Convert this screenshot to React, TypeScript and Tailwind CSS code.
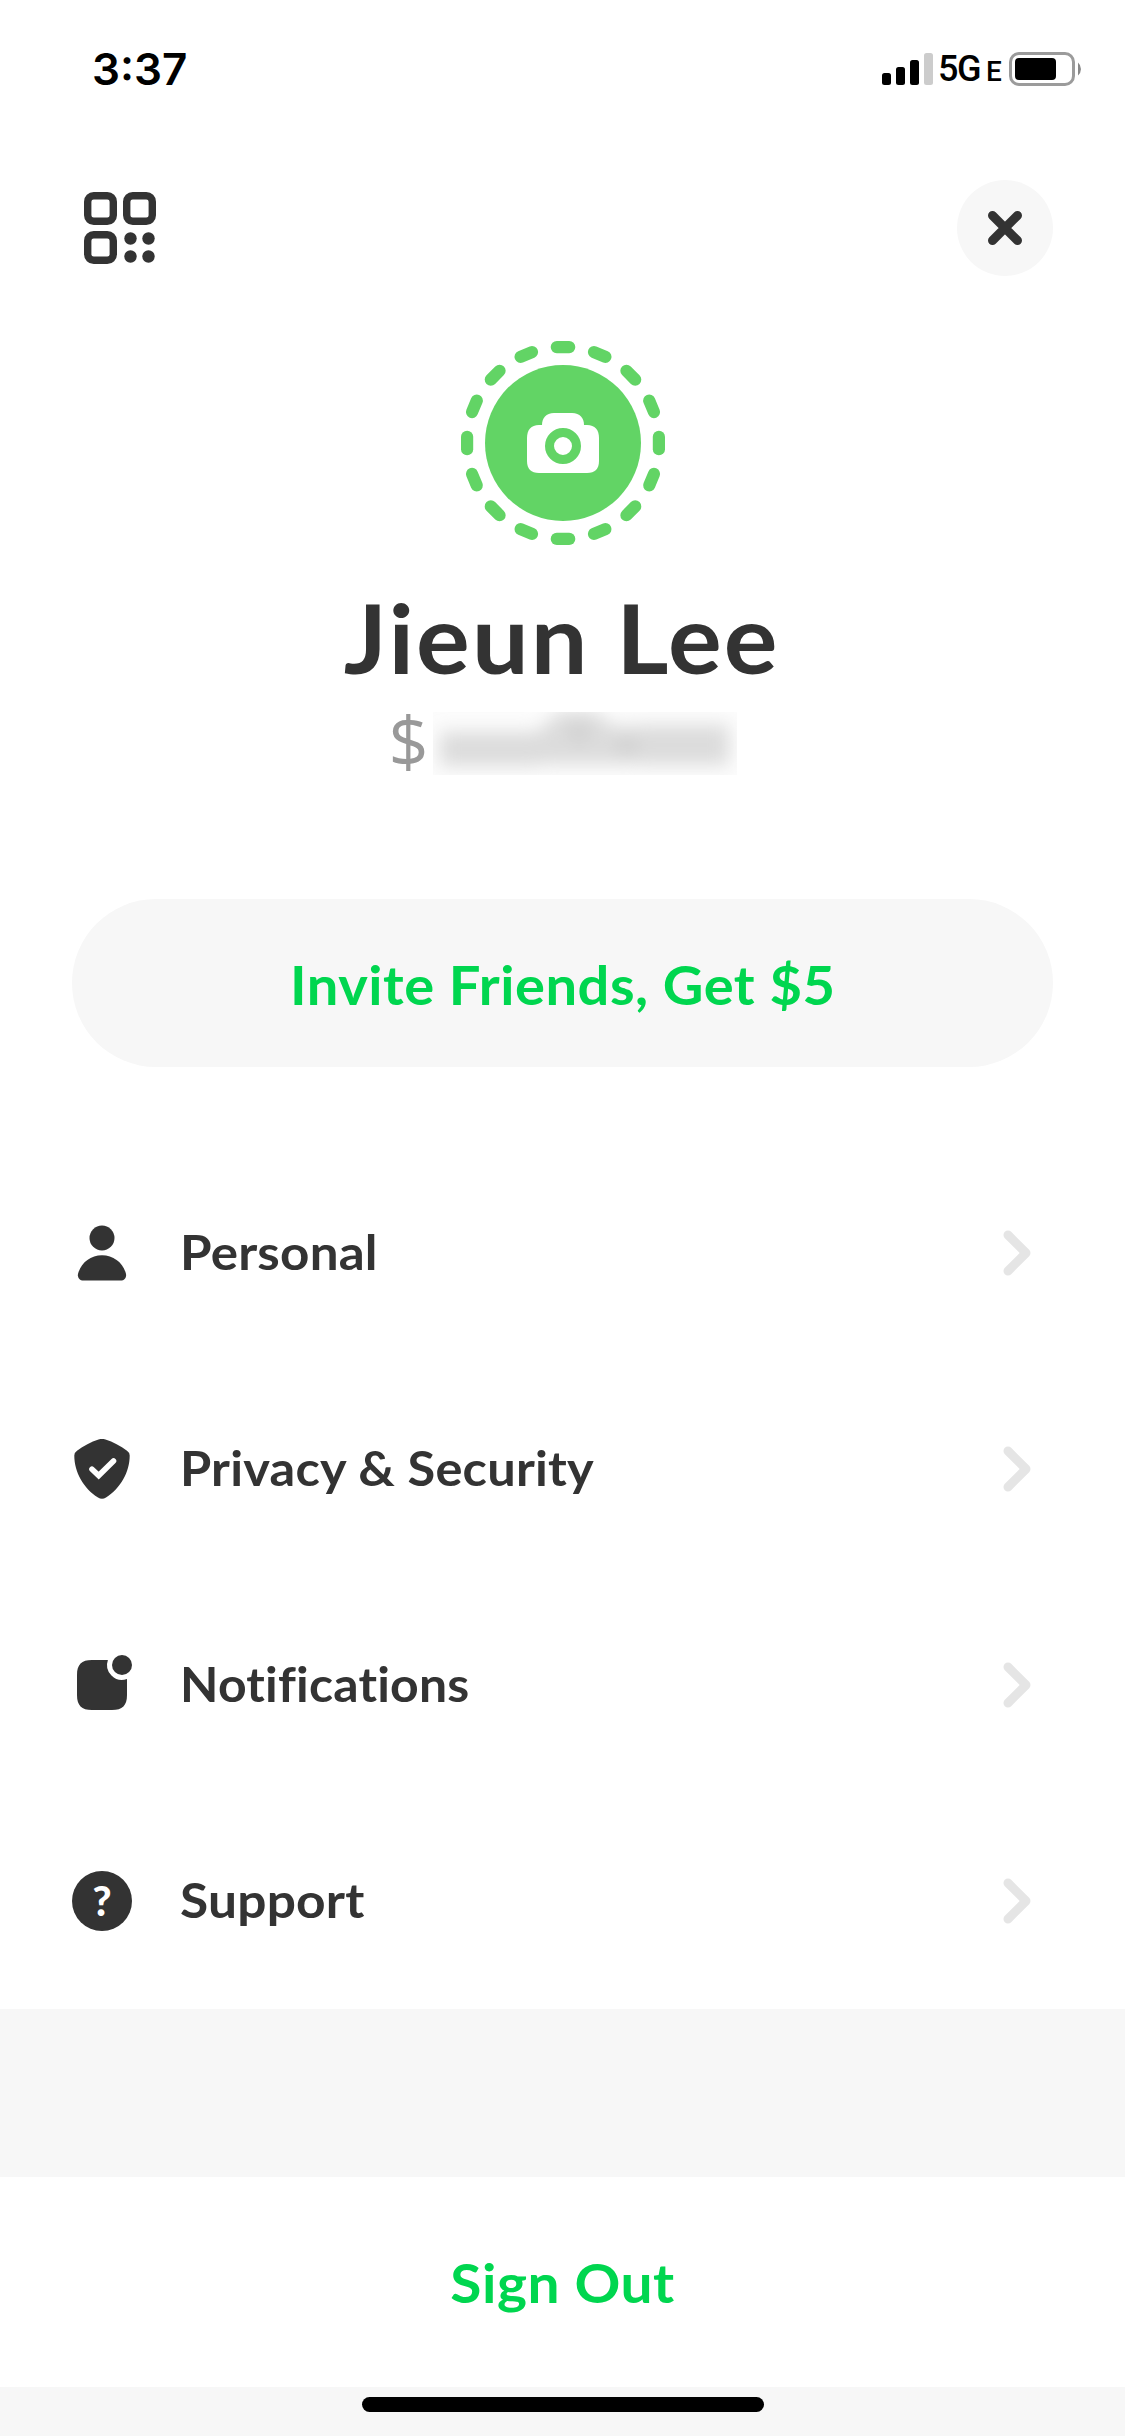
import type { ReactNode } from 'react'

// ---------------------------------------------------------------------------
// Status bar
// ---------------------------------------------------------------------------

function StatusBar() {
  return (
    <header className="flex h-[138px] items-start justify-between pl-[92px] pr-[43px] pt-[42px] text-black">
      <span className="font-['Inter',sans-serif] text-[44px] font-semibold leading-[54px]">3:37</span>
      <div className="flex h-[54px] items-center">
        <svg viewBox="0 0 51 32" className="h-8 w-[51px]" fill="currentColor">
          <rect x="0" y="20" width="9" height="12" rx="2.5" />
          <rect x="14" y="14" width="9" height="18" rx="2.5" />
          <rect x="28" y="7" width="9" height="25" rx="2.5" />
          <rect x="42" y="0" width="9" height="32" rx="2.5" fill="#cccccc" />
        </svg>
        <span className="ml-[5px] mt-[3px] flex w-[64px] items-baseline font-['Roboto',sans-serif] leading-[40px]">
          <span className="text-[36px] font-medium tracking-[-1.5px]">5G</span>
          <span className="ml-[6px] text-[28px] font-medium">E</span>
        </span>
        <svg viewBox="0 0 73 34" className="ml-[7px] h-[34px] w-[73px]">
          <rect x="1.5" y="1.5" width="63" height="31" rx="8.5" fill="none" stroke="#9b9b9b" strokeWidth="3" />
          <rect x="6" y="6" width="41" height="22" rx="4" fill="#000000" />
          <path d="M69 10.5a8.6 8.6 0 0 1 0 13z" fill="#888888" />
        </svg>
      </div>
    </header>
  )
}

// ---------------------------------------------------------------------------
// Icons
// ---------------------------------------------------------------------------

function QrIcon() {
  return (
    <svg viewBox="0 0 72 72" className="h-[72px] w-[72px]" fill="none" stroke="#333333" strokeWidth={7.4}>
      <rect x="3.7" y="3.7" width="25.6" height="25.6" rx="6" />
      <rect x="42.7" y="3.7" width="25.6" height="25.6" rx="6" />
      <rect x="3.7" y="42.7" width="25.6" height="25.6" rx="6" />
      <g fill="#333333" stroke="none">
        <circle cx="46.5" cy="46.5" r="6.2" />
        <circle cx="64.5" cy="46.5" r="6.2" />
        <circle cx="46.5" cy="64.5" r="6.2" />
        <circle cx="64.5" cy="64.5" r="6.2" />
      </g>
    </svg>
  )
}

function PersonIcon() {
  return (
    <svg viewBox="0 0 60 60" className="h-[60px] w-[60px]" fill="#333333">
      <circle cx="30" cy="15" r="12.5" />
      <path d="M30 32.2c11.5 0 21 7.5 23.9 18.3.9 3.8-1.2 7-5.4 7h-37c-4.2 0-6.3-3.2-5.4-7C9 39.7 18.5 32.2 30 32.2z" />
    </svg>
  )
}

function ShieldIcon() {
  return (
    <svg viewBox="0 0 60 60" className="h-[60px] w-[60px]">
      <path
        d="M26.5.6Q30-.9 33.5.6C41 3 48.5 7 55 11.7Q57.7 13.5 57.7 16.5C57.7 33 48.5 49.5 34 58.5Q30 61.2 26 58.5C11.5 49.5 2.3 33 2.3 16.5Q2.3 13.5 5 11.7C11.5 7 19 3 26.5.6z"
        fill="#333333"
      />
      <path d="M20 30.2l6.7 6.3L41.5 22" fill="none" stroke="#ffffff" strokeWidth="5.6" strokeLinecap="round" />
    </svg>
  )
}

function NotificationIcon() {
  return (
    <svg viewBox="0 0 60 60" className="h-[60px] w-[60px]" fill="#333333">
      <path d="M20 5h15.9a15 15 0 0 0 19.1 19.1V40c0 10.5-4.5 15-15 15H20C9.5 55 5 50.5 5 40V20C5 9.5 9.5 5 20 5z" />
      <circle cx="50" cy="10" r="10" />
    </svg>
  )
}

function SupportIcon() {
  return (
    <span className="flex h-[60px] w-[60px] items-center justify-center rounded-full bg-[#333333] text-[41px] font-black leading-[60px] text-white">
      ?
    </span>
  )
}

function Chevron() {
  return (
    <svg
      viewBox="0 0 28 46"
      className="ml-auto mr-[22px] h-[46px] w-7"
      fill="none"
      stroke="#e5e5e5"
      strokeWidth={9}
      strokeLinecap="round"
      strokeLinejoin="round"
    >
      <path d="M5 5l18 18L5 41" />
    </svg>
  )
}

// ---------------------------------------------------------------------------
// Avatar — dashed ring around the camera
// ---------------------------------------------------------------------------

const DASHES = Array.from({ length: 16 }, (_, i) => i * 22.5)

function Avatar() {
  return (
    <svg viewBox="0 0 205 204" className="h-[204px] w-[205px]" fill="#62d465">
      <g transform="translate(103 102)">
        {DASHES.map((deg) => (
          <rect key={deg} x="-12.3" y="-102" width="24.6" height="12.2" rx="6.1" transform={`rotate(${deg})`} />
        ))}
        <circle r="78" />
        <path
          d="M-36-5C-36-13-32-18-24-18H-21C-21-25-17-30-9-30H9C17-30 21-25 21-18H24C32-18 36-13 36-5V18C36 26 32 30 24 30H-24C-32 30-36 26-36 18z"
          fill="#ffffff"
        />
        <circle cy="3" r="13.5" fill="none" stroke="#62d465" strokeWidth="9" />
      </g>
    </svg>
  )
}

// Hidden part of the cashtag
function RedactedTag() {
  return (
    <svg viewBox="0 0 304 63" className="h-[63px] w-[304px] bg-[#fcfcfc]">
      <defs>
        <filter id="smudge" x="-20%" y="-50%" width="140%" height="200%">
          <feGaussianBlur stdDeviation="9" />
        </filter>
      </defs>
      <g filter="url(#smudge)" fill="#dcdcdc">
        <rect x="7" y="20" width="100" height="34" />
        <path d="M104 20l22-20h36l18 14h26v38h-102z" />
        <rect x="204" y="13" width="92" height="40" />
        <circle cx="146" cy="20" r="10" fill="#cfcfcf" />
        <circle cx="194" cy="34" r="10" fill="#cfcfcf" />
      </g>
    </svg>
  )
}

// ---------------------------------------------------------------------------
// Menu
// ---------------------------------------------------------------------------

interface MenuItem {
  label: string
  icon: ReactNode
  stretch: string
}

const MENU: MenuItem[] = [
  { label: 'Personal',           icon: <PersonIcon />,       stretch: 'scale-x-[1.065]' },
  { label: 'Privacy & Security', icon: <ShieldIcon />,       stretch: 'scale-x-[1.054]' },
  { label: 'Notifications',      icon: <NotificationIcon />, stretch: 'scale-x-[1.04]' },
  { label: 'Support',            icon: <SupportIcon />,      stretch: 'scale-x-[1.072]' },
]

export default function App() {
  return (
    <div className="flex h-[2436px] w-[1125px] flex-col overflow-hidden bg-white font-['Lato',sans-serif] text-[#333333]">
      <StatusBar />

      <div className="flex h-[203px] items-start justify-between pl-[84px] pr-[72px] pt-[42px]">
        <button type="button" className="mt-3">
          <QrIcon />
        </button>
        <button type="button" className="flex h-24 w-24 items-center justify-center rounded-full bg-[#f7f7f7]">
          <svg viewBox="0 0 34 34" className="h-[34px] w-[34px]" stroke="#333333" strokeWidth={9} strokeLinecap="round">
            <path d="M4.5 4.5l25 25M29.5 4.5l-25 25" />
          </svg>
        </button>
      </div>

      <section className="flex flex-col items-center">
        <Avatar />
        <h1 className="mr-[2px] mt-[35px] scale-x-[1.059] whitespace-nowrap text-[95px] font-bold leading-[114px] tracking-[2px]">
          Jieun Lee
        </h1>
        <div className="mt-[18px] flex h-[63px] items-center">
          <span className="w-[44px] pb-[6px] font-['Open_Sans',sans-serif] text-[70px] leading-[63px] text-[#999999]">$</span>
          <RedactedTag />
        </div>
      </section>

      <button
        type="button"
        className="mx-[72px] mt-[124px] h-[168px] shrink-0 rounded-full bg-[#f7f7f7] pt-[4px] text-[54px] font-bold leading-[164px] tracking-[0.5px] text-[#00d64f]"
      >
        <span className="inline-block scale-x-[1.038]">Invite Friends, Get $5</span>
      </button>

      <nav className="mt-[78px] flex flex-col">
        {MENU.map((item) => (
          <a key={item.label} className="flex h-[216px] items-center px-[72px]">
            {item.icon}
            <span
              className={`ml-[48px] origin-left whitespace-nowrap pb-[2px] text-[48px] font-bold leading-[60px] tracking-[0.2px] ${item.stretch}`}
            >
              {item.label}
            </span>
            <Chevron />
          </a>
        ))}
      </nav>

      <footer className="flex grow flex-col bg-[#f7f7f7] pt-[168px]">
        <button
          type="button"
          className="h-[210px] shrink-0 bg-white pt-[2px] text-[54px] font-bold leading-[208px] tracking-[0.5px] text-[#00d64f]"
        >
          <span className="inline-block scale-x-[1.053]">Sign Out</span>
        </button>
        <div className="mx-auto mt-[10px] h-[15px] w-[402px] rounded-full bg-black" />
      </footer>
    </div>
  )
}
